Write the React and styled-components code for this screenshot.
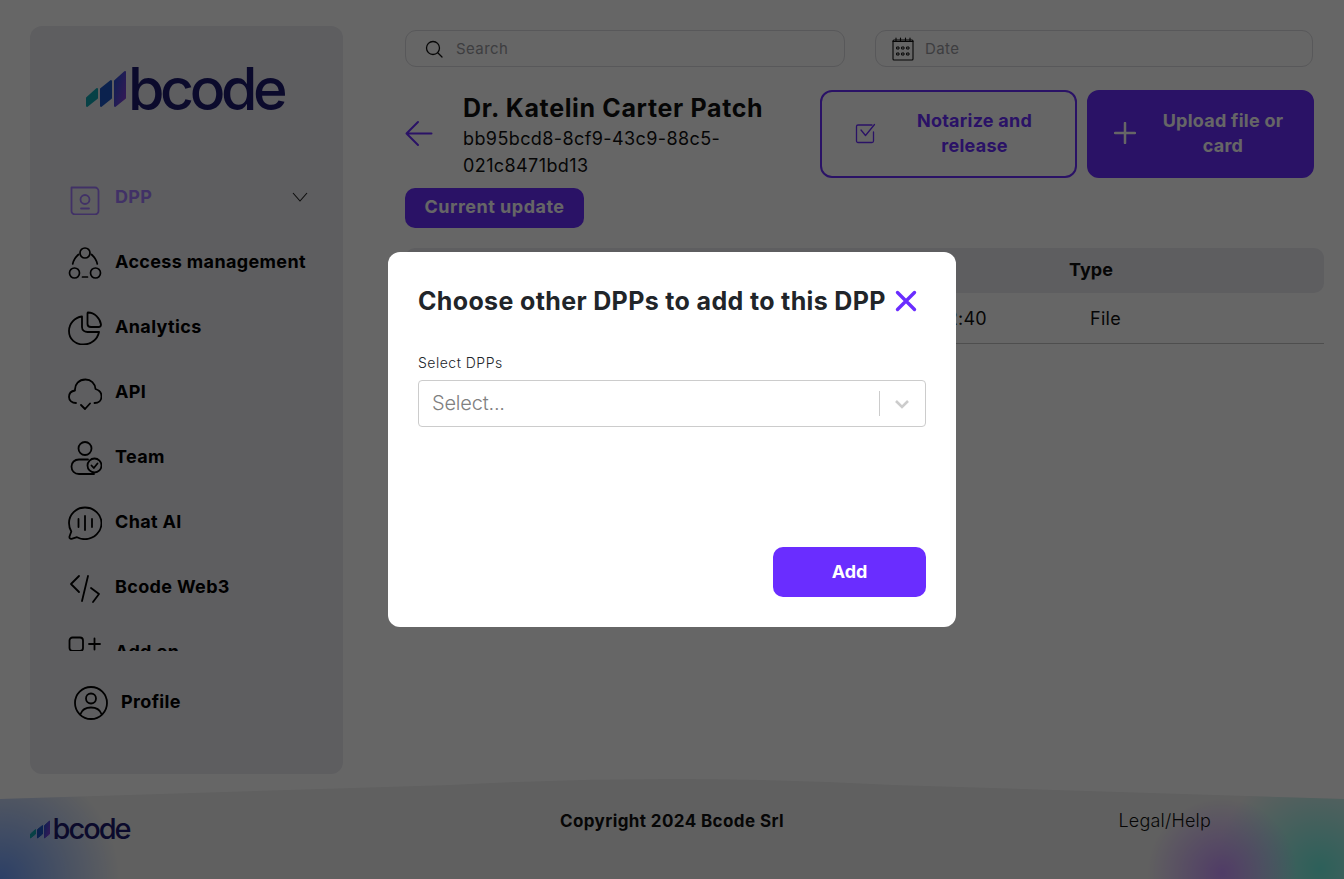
import React from "react";
import styled, { createGlobalStyle } from "styled-components";

const font = `Inter, "Noto Sans", "Liberation Sans", sans-serif`;
const violet = "#6a2dff";

const GlobalStyle = createGlobalStyle`
  html, body { margin: 0; padding: 0; background: #fff; }
  body { font-family: ${font}; color: #000; overflow: hidden; }
  * { box-sizing: border-box; }
`;

const Page = styled.div`
  height: 879px;
  display: flex;
  flex-direction: column;
  justify-content: space-between;
  overflow: hidden;
`;

const Body = styled.div`
  display: flex;
  padding: 26px 20px 0 30px;
`;

const Sidebar = styled.aside`
  width: 313px;
  height: 748px;
  flex: none;
  background: #ebebf0;
  border-radius: 12px;
  display: flex;
  flex-direction: column;
`;

const LogoWrap = styled.div`
  display: flex;
  align-items: flex-end;
  gap: ${p => (p.$small ? "2px" : "1px")};
  color: #1c1a6e;
  font-family: ${font};
  font-weight: 500;
  font-size: ${p => (p.$small ? "29px" : "59px")};
  letter-spacing: ${p => (p.$small ? "-2px" : "-4.400px")};
  line-height: ${p => (p.$small ? "26px" : "50px")};
`;

const SidebarLogo = styled.div`
  height: 139px;
  padding: 38px 0 0 56px;
`;

const Menu = styled.nav`
  height: 486px;
  overflow: hidden;
`;

const MenuItem = styled.div`
  height: 65px;
  display: flex;
  align-items: center;
  gap: 13px;
  padding: 0 35px 0 38px;
  font-size: 18px;
  font-weight: 700;
  letter-spacing: 0.35px;
  color: ${p => (p.$active ? "#a27cff" : "#000")};
`;

const ItemLabel = styled.span`
  flex: 1;
  white-space: nowrap;
  margin-top: -2px;
`;

const ProfileItem = styled(MenuItem)`
  padding-left: 44px;
  margin-top: 19px;
`;

const Main = styled.main`
  flex: 1;
  margin-left: 62px;
  padding-top: 4px;
`;

const SearchRow = styled.div`
  display: flex;
  gap: 30px;
`;

const Field = styled.div`
  width: ${p => p.$width}px;
  height: 37px;
  border: 1px solid #dcdce0;
  border-radius: 11px;
  display: flex;
  align-items: center;
  gap: ${p => p.$gap}px;
  padding-left: ${p => p.$pad}px;
  color: #9a9aa0;
  font-size: 15px;
  letter-spacing: 0.4px;
`;

const HeadRow = styled.div`
  display: flex;
  justify-content: space-between;
  margin-top: 23px;
  padding-right: 10px;
`;

const TitleGroup = styled.div`
  display: flex;
  align-items: center;
  gap: 29px;
`;

const Info = styled.div`
  width: 300px;
`;

const Name = styled.h1`
  margin: 0;
  font-size: 25px;
  font-weight: 700;
  line-height: 37px;
  white-space: nowrap;
  letter-spacing: 0.65px;
  color: #111;
`;

const Uuid = styled.div`
  font-size: 18px;
  line-height: 27px;
  letter-spacing: 0.4px;
  color: #111;
  margin-top: -2px;
  word-break: break-word;
`;

const Actions = styled.div`
  display: flex;
  gap: 10px;
`;

const ActionButton = styled.button`
  width: ${p => p.$width}px;
  height: 88px;
  display: flex;
  align-items: center;
  gap: 20px;
  padding: 0 22px 2px ${p => p.$pad}px;
  border: 2px solid ${violet};
  border-radius: 12px;
  background: ${p => (p.$filled ? violet : "transparent")};
  color: ${p => (p.$filled ? "#fff" : violet)};
  font-family: ${font};
  font-size: 18px;
  font-weight: 700;
  line-height: 25px;
  letter-spacing: 0.25px;
`;

const ActionText = styled.span`
  flex: 1;
  text-align: center;
`;

const CurrentUpdate = styled.button`
  display: block;
  width: 179px;
  height: 40px;
  margin-top: 9px;
  padding: 0 0 3px;
  border: 0;
  border-radius: 10px;
  background: ${violet};
  color: #fff;
  font-family: ${font};
  font-size: 18px;
  font-weight: 700;
  letter-spacing: 0.5px;
`;

const TableGrid = styled.div`
  display: grid;
  grid-template-columns: 1fr 300px 142px 162px;
  align-items: center;
`;

const THead = styled(TableGrid)`
  height: 45px;
  margin-top: 20px;
  padding-bottom: 2px;
  background: #ebebf0;
  border-radius: 10px;
  font-size: 18px;
  font-weight: 700;
  color: #111;
  text-align: center;
`;

const TRow = styled(TableGrid)`
  height: 51px;
  border-bottom: 1px solid #c4c4c4;
  font-size: 18px;
  color: #111;
  letter-spacing: 0.3px;
`;

const DateCell = styled.div`
  text-align: right;
  padding-right: 33px;
`;

const TypeCell = styled.div`
  padding-left: 70px;
`;

const Footer = styled.footer`
  height: 100px;
  flex: none;
  padding: 37px 30px 0;
  display: grid;
  grid-template-columns: 1fr auto 1fr;
  align-items: start;
  clip-path: path("M0 20 L450 6 Q672 -6 894 6 L1344 20 V100 H0 Z");
  background:
    radial-gradient(circle 120px at 0 100px, #6f9fff, rgba(111, 159, 255, 0) 100%),
    radial-gradient(circle 75px at 1222px 94px, #c896ff, rgba(200, 150, 255, 0) 100%),
    radial-gradient(circle 105px at 1320px 90px, #70f0e0, rgba(112, 240, 224, 0) 100%),
    #f0f0f0;
`;

const Copyright = styled.div`
  font-size: 17px;
  font-weight: 700;
  line-height: 20px;
  color: #111;
  margin-top: -5px;
  letter-spacing: 0.4px;
`;

const LegalLink = styled.div`
  justify-self: end;
  margin: -5px 103px 0 0;
  font-size: 18px;
  font-weight: 300;
  line-height: 20px;
  letter-spacing: 0.2px;
  color: #111;
`;

const Overlay = styled.div`
  position: fixed;
  inset: 0;
  background: rgba(0, 0, 0, 0.6);
  display: flex;
  justify-content: center;
  padding-top: 252px;
`;

const Modal = styled.div`
  width: 568px;
  height: 375px;
  background: #fff;
  border-radius: 12px;
  padding: 30px;
  display: flex;
  flex-direction: column;
`;

const ModalHead = styled.div`
  display: flex;
  align-items: center;
  justify-content: space-between;
  height: 38px;
`;

const ModalTitle = styled.h2`
  margin: 0;
  font-size: 25px;
  font-weight: 700;
  letter-spacing: 0.35px;
  white-space: nowrap;
  color: #212529;
`;

const CloseButton = styled.button`
  border: 0;
  padding: 0;
  margin-right: 9px;
  background: none;
  display: flex;
`;

const FieldLabel = styled.label`
  display: block;
  margin-top: 32px;
  font-size: 14px;
  font-weight: 300;
  line-height: 22px;
  letter-spacing: 0.5px;
  color: #212529;
`;

const SelectBox = styled.div`
  height: 47px;
  margin-top: 6px;
  border: 1px solid #ccc;
  border-radius: 4px;
  display: flex;
  align-items: center;
  padding: 0 15px 0 13px;
  font-size: 20px;
  font-weight: 300;
  color: #808080;
  letter-spacing: -0.2px;
`;

const SelectText = styled.span`
  flex: 1;
  margin-top: -2px;
`;

const SelectDivider = styled.span`
  width: 1px;
  height: 25px;
  background: #ccc;
  margin-right: 14px;
`;

const ModalFooter = styled.div`
  margin-top: auto;
  display: flex;
  justify-content: flex-end;
`;

const AddButton = styled.button`
  width: 153px;
  height: 50px;
  padding: 0 0 2px;
  border: 0;
  border-radius: 10px;
  background: ${violet};
  color: #fff;
  font-family: ${font};
  font-size: 18px;
  font-weight: 700;
`;

const Icon = ({ size = 34, stroke = "#000", width = 2, children }) => (
  <svg width={size} height={size} viewBox={`0 0 ${size} ${size}`} fill="none" stroke={stroke}
    strokeWidth={width} strokeLinecap="round" strokeLinejoin="round" style={{ flex: "none" }}>
    {children}
  </svg>
);

const Bars = ({ small, id }) => {
  const s = small ? 0.5 : 1;
  return (
    <svg width={41 * s} height={38 * s} viewBox="0 0 41 38" strokeWidth="2" strokeLinejoin="round"
      style={{ flex: "none", marginBottom: small ? 3 : 6 }}>
      <defs>
        <linearGradient id={id} x1="0" y1="0" x2="1" y2="1">
          <stop offset="0" stopColor="#2050d0" />
          <stop offset="1" stopColor="#8a3fd8" />
        </linearGradient>
      </defs>
      <path d="M1 36 V28 L11 19 V28 Z" fill="#12a4b0" stroke="#12a4b0" />
      <path d="M15 36 V19 L25 11 V28 Z" fill="#1d56c4" stroke="#1d56c4" />
      <path d="M29 36 V11 L39 2 V28 Z" fill={`url(#${id})`} stroke={`url(#${id})`} />
    </svg>
  );
};

const Logo = ({ small, id }) => (
  <LogoWrap $small={small}>
    <Bars small={small} id={id} />
    <span>bcode</span>
  </LogoWrap>
);

const DppIcon = () => (
  <Icon stroke="#a27cff" width={1.8}>
    <path d="M3.500 6.500 H27 a3.500 3.500 0 0 1 3.500 3.500 V30 a3.500 3.500 0 0 1 -3.500 3.500 H7 a3.500 3.500 0 0 1 -3.500 -3.500 Z" />
    <circle cx="17" cy="18.500" r="4.500" />
    <path d="M13 27.500 H21" />
  </Icon>
);

const AccessIcon = () => (
  <Icon width={1.7}>
    <circle cx="17" cy="7" r="5" />
    <circle cx="6.500" cy="27" r="5" />
    <circle cx="27.500" cy="27" r="5" />
    <path d="M4.700 18 C5.500 14 8 10.500 10.500 8.500 M23.500 8.500 C26 10.500 28.500 14 29.300 18 M14.500 31 H19.500" />
  </Icon>
);

const AnalyticsIcon = () => (
  <Icon width={1.8}>
    <path d="M14 5.500 C6.500 6.500 1 12.500 1 20 C1 28.500 7.500 33.500 15.500 33.500 C23 33.500 29.500 28.500 31 21 L19.500 21 C17 21 14 19.500 14 16 Z" />
    <path d="M20 1.500 C26.500 1.500 32 7 33 13.500 C33 15.500 32 16 30.500 16 H23 C21 16 19.500 15 19.500 13 V3 C19.500 2 19.500 1.500 20 1.500 Z" />
  </Icon>
);

const ApiIcon = () => (
  <Icon width={1.8}>
    <path d="M8 27 C4 27 1 24.500 1 21 C1 17.500 3.500 15 7 14.500 C6.500 8 11 3.500 17.500 3.500 C23 3.500 27 7.500 27.500 13 C31 14 33.500 17 33.500 20.500 C33.500 24.500 30.500 27 26.500 27" />
    <path d="M13 29 L17 33 L22 27.500" />
  </Icon>
);

const TeamIcon = () => (
  <Icon width={1.8}>
    <circle cx="17" cy="7.500" r="6.500" />
    <path d="M20 18.500 H11 C6.500 18.500 3.500 21.500 3.500 25.500 C3.500 30 6.500 33 11 33 H26" />
    <circle cx="26.500" cy="24.500" r="7" />
    <path d="M23.500 24.500 L25.800 27 L29.500 22.500" />
  </Icon>
);

const ChatIcon = () => (
  <Icon width={1.8}>
    <path d="M17 1.500 C8 1.500 1 8.500 1 17 C1 20 1.800 23 3.300 25.500 L1.500 30.500 C1.200 32 2 33 3.500 32.800 L9 31.200 C11.300 32.400 14 33.200 17 33.200 C26 33.200 33.500 26 33.500 17 C33.500 8.500 26 1.500 17 1.500 Z" />
    <path d="M10.500 13 V21 M17 10 V24 M24 13 V21" />
  </Icon>
);

const CodeIcon = () => (
  <Icon width={1.8}>
    <path d="M11 5 L3 13 L11 21 M23 17 L31 23 L25 31 M20 5 L14 30" />
  </Icon>
);

const AddOnIcon = () => (
  <Icon width={1.8}>
    <rect x="1.500" y="1.500" width="13.500" height="13.500" rx="3" />
    <path d="M21 8 H32 M26.500 2.500 V13.500" />
  </Icon>
);

const ProfileIcon = () => (
  <Icon width={1.8}>
    <circle cx="17" cy="17" r="16" />
    <circle cx="17" cy="12.500" r="5" />
    <path d="M6.500 28 C8 24 12 21.500 17 21.500 C22 21.500 26 24 27.500 28" />
  </Icon>
);

const menu = [
  { label: "Access management", icon: <AccessIcon /> },
  { label: "Analytics", icon: <AnalyticsIcon /> },
  { label: "API", icon: <ApiIcon /> },
  { label: "Team", icon: <TeamIcon /> },
  { label: "Chat AI", icon: <ChatIcon /> },
  { label: "Bcode Web3", icon: <CodeIcon /> },
  { label: "Add on", icon: <AddOnIcon /> },
];

const App = () => (
  <>
    <GlobalStyle />
    <Page>
      <Body>
        <Sidebar>
          <SidebarLogo>
            <Logo id="barsTop" />
          </SidebarLogo>
          <Menu>
            <MenuItem $active>
              <DppIcon />
              <ItemLabel>DPP</ItemLabel>
              <svg width="16" height="10" viewBox="0 0 16 10" fill="none" stroke="#222" strokeWidth="1.100" style={{ marginTop: -2 }}>
                <path d="M1 1 L8 9 L15 1" />
              </svg>
            </MenuItem>
            {menu.map(item => (
              <MenuItem key={item.label}>
                {item.icon}
                <ItemLabel>{item.label}</ItemLabel>
              </MenuItem>
            ))}
          </Menu>
          <ProfileItem>
            <ProfileIcon />
            <ItemLabel>Profile</ItemLabel>
          </ProfileItem>
        </Sidebar>
        <Main>
          <SearchRow>
            <Field $width={440} $pad={18} $gap={12}>
              <Icon size={20} stroke="#111" width={1.300}>
                <circle cx="9" cy="9" r="6.500" />
                <path d="M14 14 L18 18" />
              </Icon>
              Search
            </Field>
            <Field $width={438} $pad={15} $gap={10}>
              <Icon size={24} stroke="#111" width={1.100}>
                <rect x="2" y="3" width="20" height="20" rx="1" />
                <path d="M5 1 V4 M9.500 1 V4 M14.500 1 V4 M19 1 V4 M2 4.500 H22" />
                <path d="M6 10 H8 V12 H6 Z M11 10 H13 V12 H11 Z M16 10 H18 V12 H16 Z M6 16 H8 V18 H6 Z M11 16 H13 V18 H11 Z M16 16 H18 V18 H16 Z" strokeWidth="1" />
              </Icon>
              Date
            </Field>
          </SearchRow>
          <HeadRow>
            <TitleGroup>
              <Icon size={29} stroke={violet} width={2}>
                <path d="M26.500 13.500 H1.500 M13 2 L1.500 13.500 L13 25" />
              </Icon>
              <Info>
                <Name>Dr. Katelin Carter Patch</Name>
                <Uuid>bb95bcd8-8cf9-43c9-88c5-021c8471bd13</Uuid>
              </Info>
            </TitleGroup>
            <Actions>
              <ActionButton $width={257} $pad={33}>
                <Icon size={21} stroke={violet} width={1.300}>
                  <path d="M18.500 9 V18 a1.500 1.500 0 0 1 -1.500 1.500 H3 a1.500 1.500 0 0 1 -1.500 -1.500 V3.500 a1.500 1.500 0 0 1 1.500 -1.500 H17" />
                  <path d="M6 7 L10.500 12.500 L19.500 1.500" />
                </Icon>
                <ActionText>Notarize and release</ActionText>
              </ActionButton>
              <ActionButton $width={227} $pad={25} $filled>
                <Icon size={22} stroke="#fff" width={2.500}>
                  <path d="M11 1 V21 M1 11 H21" />
                </Icon>
                <ActionText>Upload file or card</ActionText>
              </ActionButton>
            </Actions>
          </HeadRow>
          <CurrentUpdate>Current update</CurrentUpdate>
          <THead>
            <div>Name</div>
            <div>Date</div>
            <div>Type</div>
            <div />
          </THead>
          <TRow>
            <div />
            <DateCell>12/03/2024 15:22:40</DateCell>
            <TypeCell>File</TypeCell>
            <div />
          </TRow>
        </Main>
      </Body>
      <Footer>
        <Logo small id="barsFoot" />
        <Copyright>Copyright 2024 Bcode Srl</Copyright>
        <LegalLink>Legal/Help</LegalLink>
      </Footer>
    </Page>
    <Overlay>
      <Modal>
        <ModalHead>
          <ModalTitle>Choose other DPPs to add to this DPP</ModalTitle>
          <CloseButton aria-label="Close">
            <Icon size={22} stroke={violet} width={3.400}>
              <path d="M2.500 2.500 L19.500 19.500 M19.500 2.500 L2.500 19.500" />
            </Icon>
          </CloseButton>
        </ModalHead>
        <FieldLabel>Select DPPs</FieldLabel>
        <SelectBox>
          <SelectText>Select...</SelectText>
          <SelectDivider />
          <svg width="16" height="10" viewBox="0 0 16 10" fill="none" stroke="#ccc" strokeWidth="2.600">
            <path d="M2 2 L8 8 L14 2" />
          </svg>
        </SelectBox>
        <ModalFooter>
          <AddButton>Add</AddButton>
        </ModalFooter>
      </Modal>
    </Overlay>
  </>
);

export default App;
